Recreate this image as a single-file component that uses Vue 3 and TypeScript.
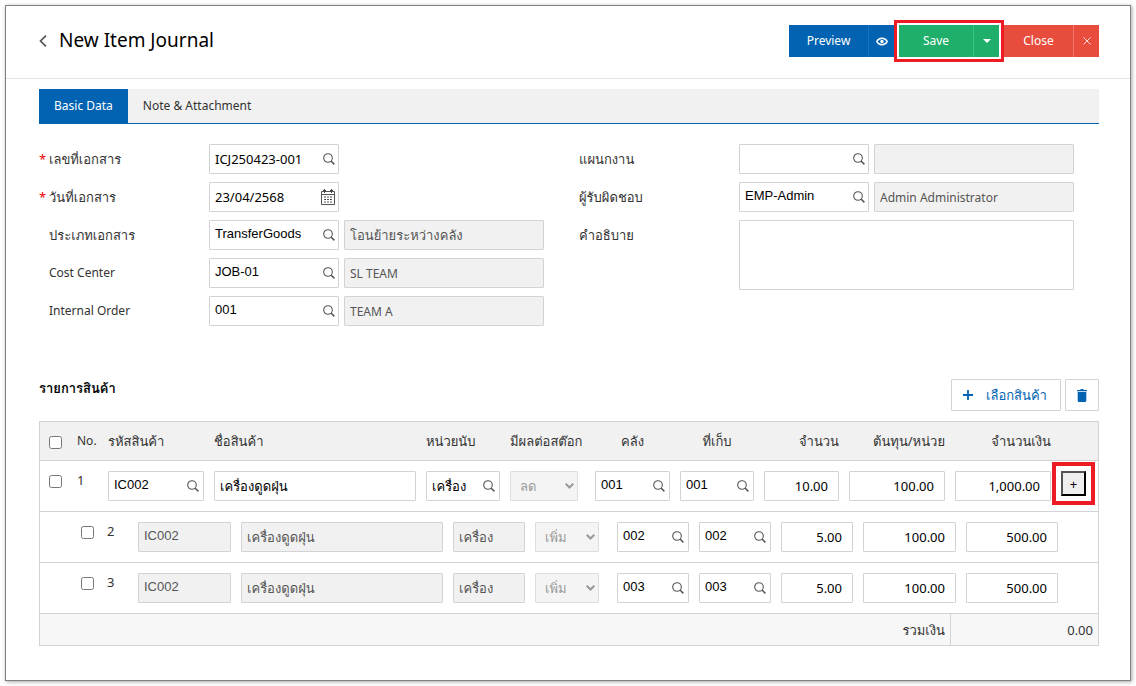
<script setup lang="ts">
import { reactive, ref } from 'vue'

interface Field {
  id: string
  label: string
  value: string
  required?: boolean
  latin?: boolean
  icon: 'search' | 'calendar'
  detail?: string
}

interface Line {
  no: number
  code: string
  name: string
  unit: string
  effect: string
  warehouse: string
  bin: string
  qty: string
  cost: string
  amount: string
  checked: boolean
}

const tabs = ['Basic Data', 'Note & Attachment']
const activeTab = ref(0)

const leftFields = reactive<Field[]>([
  { id: 'doc-no', label: 'เลขที่เอกสาร', value: 'ICJ250423-001', required: true, icon: 'search' },
  { id: 'doc-date', label: 'วันที่เอกสาร', value: '23/04/2568', required: true, icon: 'calendar' },
  { id: 'doc-type', label: 'ประเภทเอกสาร', value: 'TransferGoods', latin: true, icon: 'search', detail: 'โอนย้ายระหว่างคลัง' },
  { id: 'cost-center', label: 'Cost Center', value: 'JOB-01', latin: true, icon: 'search', detail: 'SL TEAM' },
  { id: 'internal-order', label: 'Internal Order', value: '001', latin: true, icon: 'search', detail: 'TEAM A' },
])

const rightFields = reactive<Field[]>([
  { id: 'plan', label: 'แผนกงาน', value: '', icon: 'search', detail: '' },
  { id: 'owner', label: 'ผู้รับผิดชอบ', value: 'EMP-Admin', latin: true, icon: 'search', detail: 'Admin Administrator' },
])

const description = ref('')
const allChecked = ref(false)

const parent = reactive<Line>({
  no: 1, code: 'IC002', name: 'เครื่องดูดฝุ่น', unit: 'เครื่อง', effect: 'ลด', warehouse: '001', bin: '001',
  qty: '10.00', cost: '100.00', amount: '1,000.00', checked: false,
})

const children = reactive<Line[]>([
  { no: 2, code: 'IC002', name: 'เครื่องดูดฝุ่น', unit: 'เครื่อง', effect: 'เพิ่ม', warehouse: '002', bin: '002', qty: '5.00', cost: '100.00', amount: '500.00', checked: false },
  { no: 3, code: 'IC002', name: 'เครื่องดูดฝุ่น', unit: 'เครื่อง', effect: 'เพิ่ม', warehouse: '003', bin: '003', qty: '5.00', cost: '100.00', amount: '500.00', checked: false },
])

// Thai glyphs run small next to Latin ones, so Thai strings are set one size up.
const isThai = (text: string): boolean => /[\u0E00-\u0E7F]/.test(text)
</script>

<template>
  <div class="page">
    <svg class="defs" aria-hidden="true">
      <symbol id="i-search" viewBox="0 0 12 12">
        <circle cx="5" cy="5" r="4.300" fill="none" stroke="#555" stroke-width="1.100" />
        <path d="M8 8l3.400 3.400" fill="none" stroke="#555" stroke-width="1.500" />
      </symbol>
      <symbol id="i-calendar" viewBox="0 0 14 16">
        <path d="M.5 2.500h13v13H.5zM.5 5.500h13" fill="none" stroke="#555" />
        <path d="M2 1.500h3M9 1.500h3M3.500 0v4M10.500 0v4" fill="none" stroke="#444" />
        <path d="M3 8h2M6 8h2M9 8h2M3 10.500h2M6 10.500h2M9 10.500h2M3 13h2M6 13h2M9 13h2" fill="none" stroke="#555" />
      </symbol>
    </svg>

    <main class="window">
      <header class="head">
        <button class="back" type="button" aria-label="Back">
          <svg width="8" height="12" viewBox="0 0 8 12"><path d="M7 .7L1.500 6 7 11.300" fill="none" stroke="#555" stroke-width="1.700" /></svg>
        </button>
        <h1>New Item Journal</h1>
        <div class="actions">
          <div class="group blue">
            <button type="button" class="main">Preview</button>
            <button type="button" class="side" aria-label="Preview options">
              <svg width="12" height="9" viewBox="0 0 12 9">
                <path d="M.8 4.500C3 .1 9 .1 11.200 4.500C9 8.900 3 8.900 .8 4.500z" fill="none" stroke="#fff" stroke-width="1.500" />
                <circle cx="6" cy="4.500" r="1.700" fill="#fff" />
              </svg>
            </button>
          </div>
          <div class="group green">
            <button type="button" class="main">Save</button>
            <button type="button" class="side" aria-label="Save options">
              <svg width="8" height="4" viewBox="0 0 8 4"><path d="M0 0h8L4 4z" fill="#fff" /></svg>
            </button>
          </div>
          <div class="group red">
            <button type="button" class="main">Close</button>
            <button type="button" class="side" aria-label="Close page">
              <svg width="8" height="8" viewBox="0 0 8 8"><path d="M.5 .5l7 7M7.500 .5l-7 7" stroke="#fbd9d5" stroke-width="1" /></svg>
            </button>
          </div>
        </div>
      </header>

      <div class="content">
        <nav class="tabs" role="tablist">
          <button
            v-for="(tab, i) in tabs" :key="tab" type="button" role="tab"
            :aria-selected="activeTab === i" :class="{ active: activeTab === i }" @click="activeTab = i"
          >{{ tab }}</button>
        </nav>

        <form class="form" @submit.prevent>
          <div class="column">
            <div v-for="f in leftFields" :key="f.id" class="row">
              <label :for="f.id" :class="{ thai: isThai(f.label) }"><span class="star">{{ f.required ? '*' : '' }}</span>{{ f.label }}</label>
              <div class="box lookup key">
                <input :id="f.id" v-model="f.value" type="text" :class="{ latin: f.latin }">
                <button type="button" :aria-label="f.icon === 'calendar' ? 'Pick date' : 'Search'">
                  <svg v-if="f.icon === 'calendar'" width="14" height="16"><use href="#i-calendar" /></svg>
                  <svg v-else width="12" height="12"><use href="#i-search" /></svg>
                </button>
              </div>
              <input
                v-if="f.detail !== undefined" class="box locked detail" :class="{ thai: isThai(f.detail) }"
                type="text" readonly :value="f.detail" :aria-label="f.label"
              >
            </div>
          </div>
          <div class="column right">
            <div v-for="f in rightFields" :key="f.id" class="row">
              <label :for="f.id" :class="{ thai: isThai(f.label) }">{{ f.label }}</label>
              <div class="box lookup key">
                <input :id="f.id" v-model="f.value" type="text" :class="{ latin: f.latin }">
                <button type="button" aria-label="Search"><svg width="12" height="12"><use href="#i-search" /></svg></button>
              </div>
              <input class="box locked detail" type="text" readonly :value="f.detail" :aria-label="f.label">
            </div>
            <div class="row">
              <label for="description" class="thai">คำอธิบาย</label>
              <textarea id="description" v-model="description" class="box" />
            </div>
          </div>
        </form>

        <div class="toolbar">
          <h2>รายการสินค้า</h2>
          <button type="button" class="add thai">
            <svg width="10" height="10" viewBox="0 0 10 10"><path d="M5 0v10M0 5h10" stroke="#0263b2" stroke-width="1.800" /></svg>
            เลือกสินค้า
          </button>
          <button type="button" class="trash" aria-label="Delete">
            <svg width="10" height="13" viewBox="0 0 10 13"><path d="M0 1h3l1-1h2l1 1h3v1.200H0zM.7 3h8.600v8.800q0 1.200-1.200 1.200H1.900Q.7 13 .7 11.800z" fill="#0263b2" /></svg>
          </button>
        </div>

        <table class="items">
          <colgroup>
            <col class="c-check"><col class="c-no"><col class="c-code"><col><col class="c-unit"><col class="c-effect">
            <col class="c-effect"><col class="c-unit"><col class="c-effect"><col class="c-code"><col class="c-code"><col class="c-action">
          </colgroup>
          <thead>
            <tr>
              <th class="first"><input v-model="allChecked" type="checkbox" aria-label="Select all"></th>
              <th class="no">No.</th>
              <th>รหัสสินค้า</th>
              <th>ชื่อสินค้า</th>
              <th>หน่วยนับ</th>
              <th>มีผลต่อสต๊อก</th>
              <th class="mid">คลัง</th>
              <th class="mid">ที่เก็บ</th>
              <th class="end">จำนวน</th>
              <th class="end">ต้นทุน/หน่วย</th>
              <th class="end">จำนวนเงิน</th>
              <th />
            </tr>
          </thead>
          <tbody>
            <tr class="line">
              <td class="first"><input v-model="parent.checked" type="checkbox" aria-label="Select line 1"></td>
              <td>{{ parent.no }}</td>
              <td>
                <div class="box lookup">
                  <input v-model="parent.code" class="latin" type="text" aria-label="รหัสสินค้า">
                  <button type="button" aria-label="Search"><svg width="12" height="12"><use href="#i-search" /></svg></button>
                </div>
              </td>
              <td><input v-model="parent.name" class="box" type="text" aria-label="ชื่อสินค้า"></td>
              <td>
                <div class="box lookup">
                  <input v-model="parent.unit" type="text" aria-label="หน่วยนับ">
                  <button type="button" aria-label="Search"><svg width="12" height="12"><use href="#i-search" /></svg></button>
                </div>
              </td>
              <td class="effect">
                <div class="pick">
                  <select class="box" disabled aria-label="มีผลต่อสต๊อก"><option>{{ parent.effect }}</option></select>
                  <svg width="9" height="6" viewBox="0 0 9 6"><path d="M.7 .8l3.800 3.700L8.300 .8" fill="none" stroke="#999" stroke-width="2" /></svg>
                </div>
              </td>
              <td>
                <div class="box lookup">
                  <input v-model="parent.warehouse" class="latin" type="text" aria-label="คลัง">
                  <button type="button" aria-label="Search"><svg width="12" height="12"><use href="#i-search" /></svg></button>
                </div>
              </td>
              <td>
                <div class="box lookup">
                  <input v-model="parent.bin" class="latin" type="text" aria-label="ที่เก็บ">
                  <button type="button" aria-label="Search"><svg width="12" height="12"><use href="#i-search" /></svg></button>
                </div>
              </td>
              <td><input v-model="parent.qty" class="box num" type="text" aria-label="จำนวน"></td>
              <td><input v-model="parent.cost" class="box num" type="text" aria-label="ต้นทุน/หน่วย"></td>
              <td><input v-model="parent.amount" class="box num" type="text" aria-label="จำนวนเงิน"></td>
              <td><button type="button" class="plus">+</button></td>
            </tr>
            <tr v-for="line in children" :key="line.no">
              <td colspan="12" class="nest">
                <table class="sub">
                  <colgroup>
                    <col class="s-check"><col class="c-no"><col class="s-code"><col><col class="s-unit"><col class="s-unit">
                    <col class="s-unit"><col class="s-unit"><col class="s-unit"><col class="s-code"><col class="s-amount"><col class="s-action">
                  </colgroup>
                  <tbody>
                    <tr class="line">
                      <td class="first"><input v-model="line.checked" type="checkbox" :aria-label="`Select line ${line.no}`"></td>
                      <td>{{ line.no }}</td>
                      <td><input :value="line.code" class="box locked latin" type="text" readonly aria-label="รหัสสินค้า"></td>
                      <td><input :value="line.name" class="box locked thai" type="text" readonly aria-label="ชื่อสินค้า"></td>
                      <td><input :value="line.unit" class="box locked thai" type="text" readonly aria-label="หน่วยนับ"></td>
                      <td class="effect">
                        <div class="pick">
                          <select class="box" disabled aria-label="มีผลต่อสต๊อก"><option>{{ line.effect }}</option></select>
                          <svg width="9" height="6" viewBox="0 0 9 6"><path d="M.7 .8l3.800 3.700L8.300 .8" fill="none" stroke="#999" stroke-width="2" /></svg>
                        </div>
                      </td>
                      <td>
                        <div class="box lookup">
                          <input v-model="line.warehouse" class="latin" type="text" aria-label="คลัง">
                          <button type="button" aria-label="Search"><svg width="12" height="12"><use href="#i-search" /></svg></button>
                        </div>
                      </td>
                      <td>
                        <div class="box lookup">
                          <input v-model="line.bin" class="latin" type="text" aria-label="ที่เก็บ">
                          <button type="button" aria-label="Search"><svg width="12" height="12"><use href="#i-search" /></svg></button>
                        </div>
                      </td>
                      <td><input v-model="line.qty" class="box num" type="text" aria-label="จำนวน"></td>
                      <td><input v-model="line.cost" class="box num" type="text" aria-label="ต้นทุน/หน่วย"></td>
                      <td><input v-model="line.amount" class="box num" type="text" aria-label="จำนวนเงิน"></td>
                      <td />
                    </tr>
                  </tbody>
                </table>
              </td>
            </tr>
          </tbody>
          <tfoot>
            <tr>
              <td colspan="10">รวมเงิน</td>
              <td colspan="2" class="total">0.00</td>
            </tr>
          </tfoot>
        </table>
      </div>
    </main>
  </div>
</template>

<style>
body {
  background: #fff;
}
</style>

<style scoped>
.page,
.page * {
  box-sizing: border-box;
}

.page {
  min-height: 100vh;
  padding: 5px;
  font-family: Tahoma, "Noto Sans", Loma, "Noto Sans Thai Looped", "Noto Sans Thai", sans-serif;
  font-size: 12px;
  line-height: 18px;
  color: #333;
}

.defs {
  position: absolute;
  width: 0;
  height: 0;
}

button,
input,
select,
textarea {
  font: inherit;
  color: inherit;
}

button {
  margin: 0;
  padding: 0;
  border: 0;
  background: none;
  cursor: pointer;
}

svg {
  display: block;
}

.window {
  min-height: calc(100vh - 10px);
  border: 1px solid #808080;
  background: #fff;
  box-shadow: 1px 1px 4px rgba(0, 0, 0, 0.35);
}

.head {
  display: flex;
  align-items: center;
  height: 73px;
  padding: 0 31px 2px 33px;
  border-bottom: 1px solid #e2e2e2;
}

.back {
  width: 20px;
}

h1 {
  flex: 1;
  margin: 0;
  padding-bottom: 2px;
  font-size: 19px;
  line-height: 28px;
  font-weight: 400;
  color: #000;
}

.actions {
  display: flex;
  gap: 5px;
}

.group {
  display: flex;
  height: 32px;
  color: #fff;
}

.group .main {
  flex: 1;
}

.side {
  display: flex;
  align-items: center;
  justify-content: center;
  width: 26px;
  border-left: 1px solid;
}

.blue {
  width: 105px;
  background: #0263b2;
}

.green {
  width: 100px;
  background: #20af6b;
  box-shadow: 0 0 0 2px #fff, 0 0 0 5px #ed1c24;
}

.red {
  width: 95px;
  background: #e84c3d;
}

.blue .side {
  border-color: #1173c4;
}

.green .side {
  border-color: #3cc483;
}

.red .side {
  border-color: #f0756a;
}

.content {
  padding: 10px 31px 30px 33px;
}

.tabs {
  display: flex;
  height: 35px;
  border-bottom: 1px solid #0263b2;
  background: #f1f1f1;
}

.tabs button {
  padding: 0 15px;
}

.tabs .active {
  background: #0263b2;
  color: #fff;
}

.form {
  display: grid;
  grid-template-columns: 540px 1fr;
  margin-top: 20px;
}

.column {
  display: flex;
  flex-direction: column;
  gap: 8px;
}

.row {
  display: flex;
  gap: 5px;
}

label {
  width: 165px;
  padding-top: 6px;
}

.right label {
  width: 155px;
}

.star {
  display: inline-block;
  width: 10px;
  color: #e00;
}

.box {
  display: block;
  width: 100%;
  height: 30px;
  margin: 0;
  padding: 0 5px;
  border: 1px solid #d3d3d3;
  border-radius: 1px;
  background: #fff;
  color: #000;
  font-size: 13px;
  outline: 0;
}

.row .key {
  width: 130px;
}

.row .detail {
  width: 200px;
  font-size: 12px;
}

.page .thai {
  font-size: 13px;
}

.row textarea {
  width: 335px;
  height: 70px;
  resize: none;
}

.locked {
  background: #f1f1f1;
  color: #555;
}

.lookup {
  display: flex;
  padding: 0;
}

.lookup input {
  flex: 1;
  width: 0;
  min-width: 0;
  padding: 0 0 0 5px;
  border: 0;
  background: none;
  outline: 0;
}

.lookup button {
  display: flex;
  align-items: center;
  justify-content: flex-end;
  width: 20px;
  margin-right: 4px;
}

.row .lookup button {
  margin-right: 3px;
}

.page .latin {
  padding-bottom: 3px;
  font-family: Arial, "Liberation Sans", sans-serif;
}

.toolbar {
  display: flex;
  gap: 4px;
  height: 32px;
  margin-top: 53px;
}

h2 {
  flex: 1;
  margin: 0;
  font-size: 13px;
  line-height: 18px;
  font-weight: 700;
  color: #000;
}

.add,
.trash {
  display: flex;
  align-items: center;
  border: 1px solid #d3d3d3;
  border-radius: 1px;
  color: #0263b2;
}

.add {
  gap: 13px;
  width: 110px;
  padding-left: 11px;
}

.trash {
  justify-content: center;
  width: 34px;
}

table {
  width: 100%;
  table-layout: fixed;
  border-spacing: 0;
  font-size: 13px;
}

.items {
  margin-top: 10px;
  border: 1px solid #d3d3d3;
}

.c-check { width: 32px; }
.c-no { width: 31px; }
.c-code { width: 106px; }
.c-unit { width: 84px; }
.c-effect { width: 85px; }
.c-action { width: 42px; }
.s-check { width: 30px; }
.s-code { width: 103px; }
.s-unit { width: 82px; }
.s-amount { width: 102px; }
.s-action { width: 35px; }

th {
  height: 39px;
  padding: 0 5px;
  border-bottom: 1px solid #d3d3d3;
  background: #f1f1f1;
  font-weight: 400;
  text-align: left;
  white-space: nowrap;
}

.no {
  font-size: 12px;
}

th.mid {
  text-align: center;
}

th.end {
  text-align: right;
}

.page .first {
  padding-left: 9px;
}

.first input {
  display: block;
  width: 13px;
  height: 13px;
  margin: 2px 0 0;
}

td.first input {
  margin-top: 4px;
}

.line td {
  height: 50px;
  padding: 10px 5px;
  vertical-align: top;
}

.items > tbody > tr > td {
  border-bottom: 1px solid #d3d3d3;
}

.items .nest {
  padding: 0 0 0 32px;
}

.line .effect {
  padding-right: 12px;
}

.sub .effect {
  padding-right: 13px;
}

.pick {
  display: grid;
  align-items: center;
}

.pick > * {
  grid-area: 1 / 1;
}

.pick select {
  appearance: none;
  padding-left: 9px;
  border-color: #dedede;
  background: #f4f4f4;
  color: #999;
  opacity: 1;
}

.pick svg {
  justify-self: end;
  margin-right: 4px;
  pointer-events: none;
}

.num {
  padding-right: 10px;
  text-align: right;
}

.plus {
  display: block;
  width: 25px;
  height: 25px;
  border: 2px outset #000;
  background: #efefef;
  line-height: 20px;
  color: #000;
  box-shadow: 0 0 0 5px #fff, 0 0 0 9px #ed1c24;
}

tfoot td {
  height: 31px;
  padding: 0 5px;
  background: #f7f7f7;
  text-align: right;
}

tfoot .total {
  border-left: 1px solid #d3d3d3;
}
</style>
